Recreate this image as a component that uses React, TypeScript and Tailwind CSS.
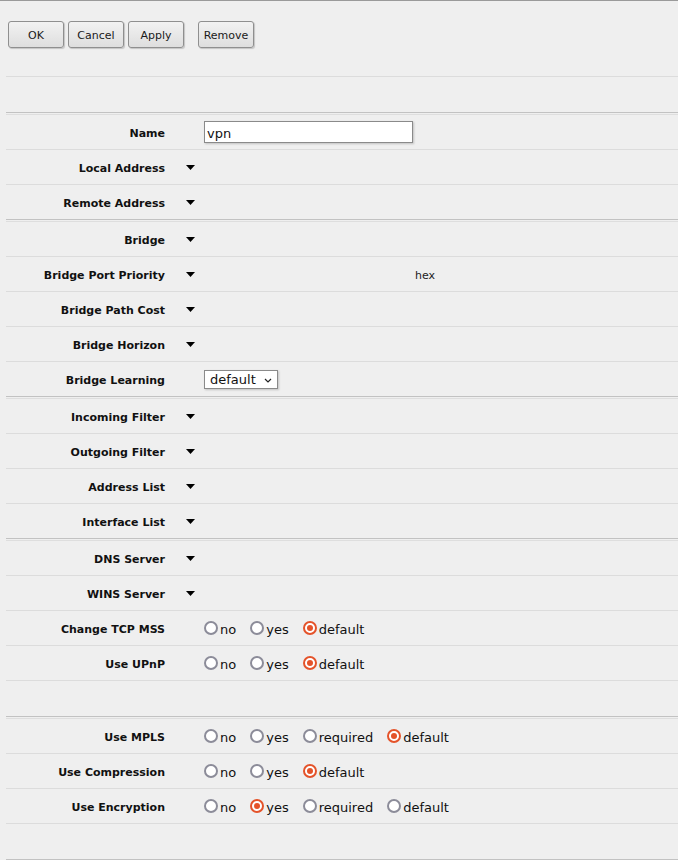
import React from "react";

type Opt = { label: string; checked?: boolean };

type Row =
  | { kind: "text"; label: string; value: string }
  | { kind: "drop"; label: string; suffix?: string }
  | { kind: "select"; label: string; value: string }
  | { kind: "radio"; label: string; options: Opt[] }
  | { kind: "blank" };

const font = "font-['DejaVu_Sans','Verdana',sans-serif]";

const sections: Row[][] = [
  [
    { kind: "text", label: "Name", value: "vpn" },
    { kind: "drop", label: "Local Address" },
    { kind: "drop", label: "Remote Address" },
  ],
  [
    { kind: "drop", label: "Bridge" },
    { kind: "drop", label: "Bridge Port Priority", suffix: "hex" },
    { kind: "drop", label: "Bridge Path Cost" },
    { kind: "drop", label: "Bridge Horizon" },
    { kind: "select", label: "Bridge Learning", value: "default" },
  ],
  [
    { kind: "drop", label: "Incoming Filter" },
    { kind: "drop", label: "Outgoing Filter" },
    { kind: "drop", label: "Address List" },
    { kind: "drop", label: "Interface List" },
  ],
  [
    { kind: "drop", label: "DNS Server" },
    { kind: "drop", label: "WINS Server" },
    {
      kind: "radio",
      label: "Change TCP MSS",
      options: [{ label: "no" }, { label: "yes" }, { label: "default", checked: true }],
    },
    {
      kind: "radio",
      label: "Use UPnP",
      options: [{ label: "no" }, { label: "yes" }, { label: "default", checked: true }],
    },
    { kind: "blank" },
  ],
  [
    {
      kind: "radio",
      label: "Use MPLS",
      options: [
        { label: "no" },
        { label: "yes" },
        { label: "required" },
        { label: "default", checked: true },
      ],
    },
    {
      kind: "radio",
      label: "Use Compression",
      options: [{ label: "no" }, { label: "yes" }, { label: "default", checked: true }],
    },
    {
      kind: "radio",
      label: "Use Encryption",
      options: [
        { label: "no" },
        { label: "yes", checked: true },
        { label: "required" },
        { label: "default" },
      ],
    },
    { kind: "blank" },
  ],
];

function ToolButton({ children, className = "" }: { children: React.ReactNode; className?: string }) {
  return (
    <button
      type="button"
      className={`h-[27px] w-[56px] rounded-[3px] border border-[#8f8f8f] bg-gradient-to-b from-[#f2f2f2] to-[#dedede] pt-[3px] text-[11px] text-[#1a1a1a] shadow-[1px_1px_1px_rgba(0,0,0,0.18)] ${className}`}
    >
      {children}
    </button>
  );
}

function Triangle() {
  return (
    <svg width="9" height="5" viewBox="0 0 9 5" className="block">
      <path d="M0 0h9L4.5 5z" fill="#000" />
    </svg>
  );
}

function Radio({ opt }: { opt: Opt }) {
  return (
    <label className="mr-[14px] flex items-center text-[13px] text-[#111]">
      {opt.checked ? (
        <span className="flex h-[14px] w-[14px] items-center justify-center rounded-full border-2 border-[#e4532a] bg-white">
          <span className="h-[6px] w-[6px] rounded-full bg-[#e4532a]" />
        </span>
      ) : (
        <span className="h-[14px] w-[14px] rounded-full border-2 border-[#8c8c99] bg-white" />
      )}
      <span className="ml-[2px] pt-[4px]">{opt.label}</span>
    </label>
  );
}

function FormRow({ row, last }: { row: Row; last: boolean }) {
  const edge = last ? "h-[34px]" : "h-[35px] border-b border-[#dcdcdc]";
  if (row.kind === "blank") return <div className="h-[35px]" />;

  return (
    <div className={`flex items-center ${edge}`}>
      <div className="w-[159px] pt-[4px] text-right text-[11px] font-bold text-[#111]">{row.label}</div>
      <div className="ml-[21px] flex w-[18px] justify-start">
        {row.kind === "drop" ? <Triangle /> : null}
      </div>
      {row.kind === "text" ? (
        <input
          readOnly
          value={row.value}
          className="h-[22px] w-[209px] border border-[#8a8a8a] bg-white px-[2px] pt-[2px] text-[13px] text-[#111] shadow-[1px_1px_2px_rgba(0,0,0,0.2)] outline-none"
        />
      ) : null}
      {row.kind === "drop" && row.suffix ? (
        <span className="ml-[211px] pt-[4px] text-[11px] text-[#222]">{row.suffix}</span>
      ) : null}
      {row.kind === "select" ? (
        <div className="flex h-[19px] w-[74px] items-center border border-[#8a8a8a] bg-white pl-[5px] pt-[2px] text-[13px] text-[#111] shadow-[1px_1px_2px_rgba(0,0,0,0.2)]">
          <span>{row.value}</span>
          <svg width="8" height="5" viewBox="0 0 8 5" className="ml-[8px]">
            <path d="M1 1l3 3 3-3" fill="none" stroke="#222" strokeWidth="1.2" />
          </svg>
        </div>
      ) : null}
      {row.kind === "radio" ? (
        <div className="flex items-center">
          {row.options.map((o) => (
            <Radio key={o.label} opt={o} />
          ))}
        </div>
      ) : null}
    </div>
  );
}

function Divider() {
  return <div className="h-[3px] border-t border-b border-t-[#c2c2c2] border-b-[#dedede]" />;
}

export default function App() {
  return (
    <div className={`min-h-[860px] w-[678px] border-t border-[#9a9a9a] bg-[#efefef] ${font}`}>
      <div className="flex h-[75px] items-start gap-[4px] pl-[8px] pt-[20px]">
        <ToolButton>OK</ToolButton>
        <ToolButton>Cancel</ToolButton>
        <ToolButton>Apply</ToolButton>
        <ToolButton className="ml-[10px]">Remove</ToolButton>
      </div>
      <div className="ml-[6px]">
        <div className="h-[36px] border-t border-[#dcdcdc]" />
        {sections.map((rows, i) => (
          <div key={i}>
            <Divider />
            {rows.map((r, j) => (
              <FormRow key={j} row={r} last={j === rows.length - 1} />
            ))}
          </div>
        ))}
        <Divider />
      </div>
    </div>
  );
}
